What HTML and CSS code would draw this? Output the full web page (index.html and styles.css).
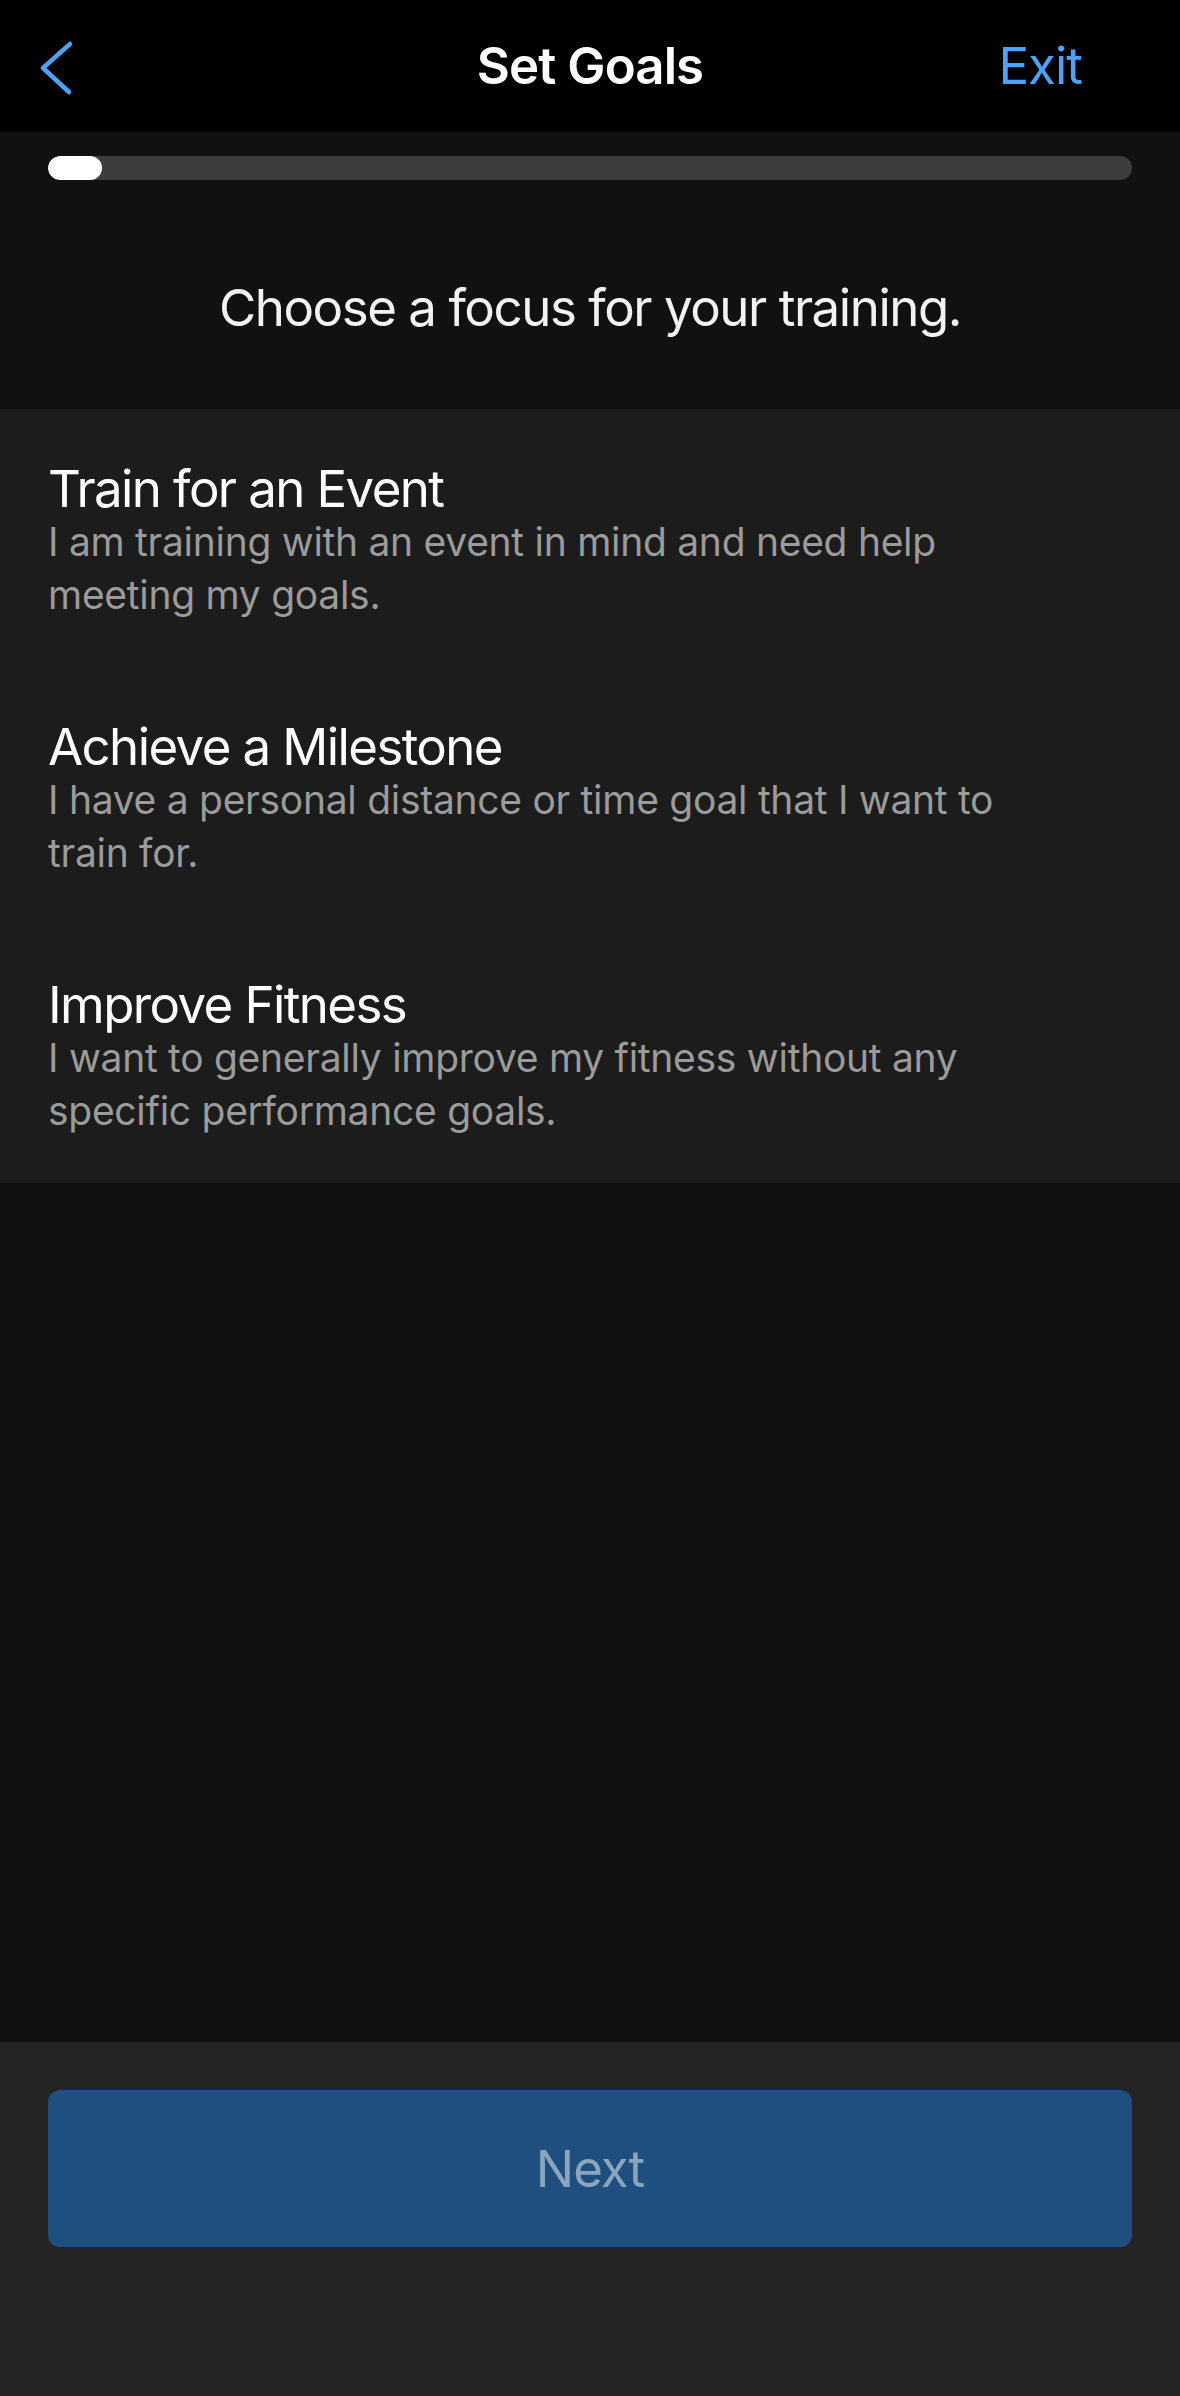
FILE: index.html
```html
<!DOCTYPE html>
<html lang="en">
<head>
<meta charset="utf-8">
<title>Set Goals</title>
<link rel="stylesheet" href="styles.css">
</head>
<body>
<div class="screen">
  <header class="nav">
    <div class="nav-left">
      <svg class="back" width="40" height="60" viewBox="0 0 40 60" aria-hidden="true">
        <path d="M34 6 L7 30 L33 54" fill="none" stroke="#4ea1f4" stroke-width="4.5" stroke-linecap="round" stroke-linejoin="round"/>
      </svg>
    </div>
    <h1 class="nav-title">Set Goals</h1>
    <div class="nav-right"><span class="exit">Exit</span></div>
  </header>

  <section class="intro">
    <div class="track"><div class="fill"></div></div>
    <p class="prompt">Choose a focus for your training.</p>
  </section>

  <ul class="options">
    <li class="option">
      <div class="opt-title">Train for an Event</div>
      <div class="opt-desc">I am training with an event in mind and need help meeting my goals.</div>
    </li>
    <li class="option">
      <div class="opt-title">Achieve a Milestone</div>
      <div class="opt-desc">I have a personal distance or time goal that I want to train for.</div>
    </li>
    <li class="option">
      <div class="opt-title">Improve Fitness</div>
      <div class="opt-desc">I want to generally improve my fitness without any specific performance goals.</div>
    </li>
  </ul>

  <div class="spacer"></div>

  <footer class="footer">
    <button class="next" type="button">Next</button>
  </footer>
</div>
</body>
</html>
```
FILE: styles.css
```css
* { box-sizing: border-box; }

html, body {
  margin: 0;
  padding: 0;
  background: #111111;
}

body {
  font-family: Inter, "Noto Sans", "Liberation Sans", sans-serif;
  color: #ffffff;
}

.screen {
  width: 1180px;
  height: 2396px;
  display: flex;
  flex-direction: column;
}

/* Navigation bar */
.nav {
  height: 132px;
  background: #000000;
  display: grid;
  grid-template-columns: 1fr auto 1fr;
  align-items: center;
}

.nav-left {
  display: flex;
  align-items: center;
  padding-left: 36px;
}

.back {
  display: block;
  margin-top: 4px;
}

.nav-title {
  margin: 0;
  font-size: 51px;
  font-weight: 600;
  line-height: 132px;
  letter-spacing: -0.9px;
  color: #ffffff;
}

.nav-right {
  display: flex;
  justify-content: flex-end;
  padding-right: 98px;
}

.exit {
  font-size: 51px;
  line-height: 132px;
  letter-spacing: -1px;
  color: #4ea1f4;
}

/* Progress + prompt */
.intro {
  background: #111111;
  height: 277px;
  padding: 24px 48px 0;
}

.track {
  height: 24px;
  border-radius: 12px;
  background: #3d3d3d;
  overflow: hidden;
}

.fill {
  width: 54px;
  height: 24px;
  border-radius: 12px;
  background: #ffffff;
}

.prompt {
  margin: 97px 0 0;
  text-align: center;
  font-size: 51px;
  line-height: 61px;
  letter-spacing: -1.45px;
  color: #f2f2f2;
}

/* Options list */
.options {
  list-style: none;
  margin: 0;
  padding: 0;
  background: #1c1c1c;
}

.option {
  padding: 53px 48px 46px 48px;
  height: 258px;
}

.opt-title {
  font-size: 51px;
  line-height: 53px;
  letter-spacing: -1.6px;
  color: #ffffff;
}

.opt-desc {
  max-width: 1000px;
  font-size: 39px;
  line-height: 53px;
  letter-spacing: -0.28px;
  color: #9b9b9b;
}

.spacer {
  flex: 1;
  background: #111111;
}

/* Footer */
.footer {
  height: 354px;
  background: #242424;
  padding: 48px 48px 0;
}

.next {
  display: block;
  width: 100%;
  height: 157px;
  border: none;
  border-radius: 12px;
  background: #1f4f7e;
  color: #8ba5bf;
  font-family: Inter, "Noto Sans", "Liberation Sans", sans-serif;
  font-size: 51px;
  letter-spacing: -1px;
  padding: 0;
}
```
